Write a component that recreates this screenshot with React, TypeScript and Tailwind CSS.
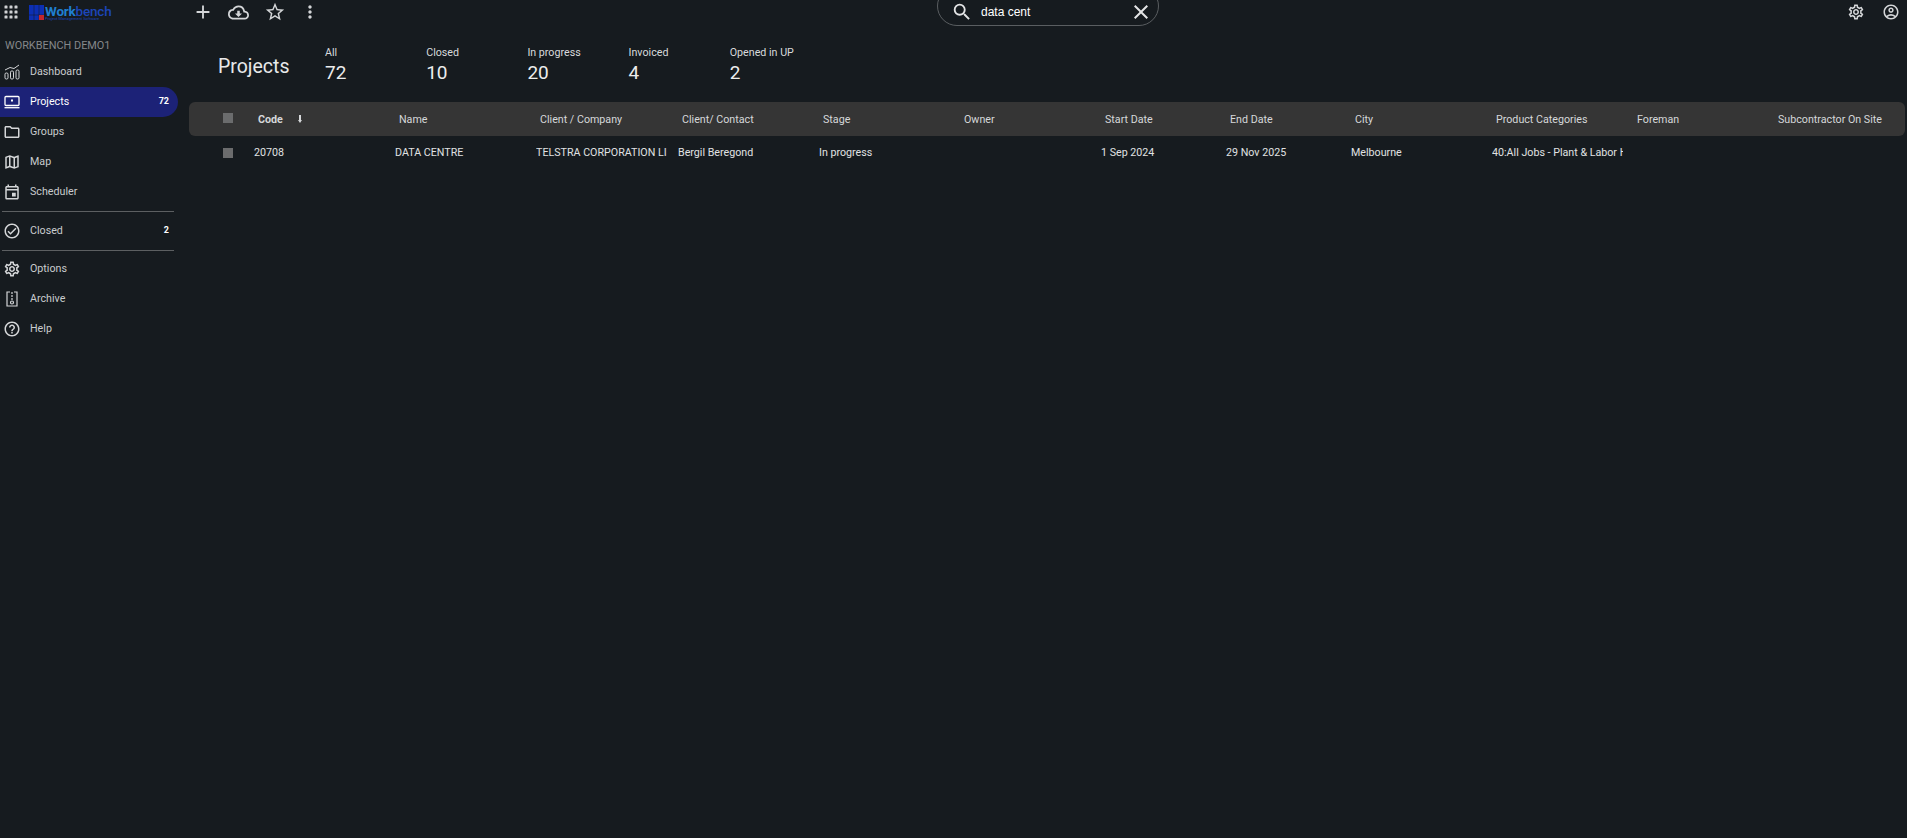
import {
  MdAdd,
  MdClose,
  MdMoreVert,
  MdOutlineAccountCircle,
  MdOutlineCheckCircle,
  MdOutlineCloudDownload,
  MdOutlineEvent,
  MdOutlineFolder,
  MdOutlineHelpOutline,
  MdOutlineMap,
  MdOutlineSettings,
  MdSearch,
  MdStarBorder,
} from 'react-icons/md';
import type { ReactNode } from 'react';

function AppsIcon() {
  const dots = [2, 7, 12];
  return (
    <svg width="14" height="14" viewBox="0 0 14 14" fill="#d0d2d4">
      {dots.map((y) =>
        dots.map((x) => <rect key={`${x}-${y}`} x={x - 1.5} y={y - 1.5} width="3" height="3" rx="0.6" />)
      )}
    </svg>
  );
}

function LogoMark() {
  return (
    <svg width="15" height="15" viewBox="0 0 15 15">
      <rect width="15" height="15" fill="#0c2fb4" />
      <rect x="4.5" width="1" height="15" fill="#15181c" opacity="0.5" />
      <rect x="9.5" width="1" height="15" fill="#15181c" opacity="0.5" />
      <rect y="9.5" width="15" height="1" fill="#15181c" opacity="0.5" />
      <rect x="10" y="10" width="5" height="5" fill="#c1272d" />
    </svg>
  );
}

function DashboardIcon() {
  return (
    <svg width="16" height="16" viewBox="0 0 16 16" fill="none" stroke="#d4d6d8" strokeWidth="1">
      <path d="M1 6 L6 3.5 L10 4.5 L15 1" />
      <rect x="1" y="9" width="3" height="6" rx="1.2" />
      <rect x="6.5" y="7" width="3" height="8" rx="1.2" />
      <rect x="12" y="6" width="3" height="9" rx="1.2" />
    </svg>
  );
}

function ProjectsIcon() {
  return (
    <svg width="16" height="14" viewBox="0 0 16 14" fill="none" stroke="#fff" strokeWidth="1.3">
      <rect x="1" y="1.5" width="14" height="9" rx="1" />
      <path d="M0.5 12.7 H15.5" />
      <rect x="7" y="4.5" width="2" height="2" fill="#fff" stroke="none" />
    </svg>
  );
}

function ArchiveIcon() {
  return (
    <svg width="12" height="16" viewBox="0 0 12 16" fill="none" stroke="#d4d6d8" strokeWidth="1.2">
      <path d="M4 1 H1 V15 H11 V1 H8" />
      <path d="M6 1 V3 M6 4 V6 M6 7 V9" />
      <circle cx="6" cy="11.5" r="1.5" />
    </svg>
  );
}

function SortArrow() {
  return (
    <svg width="4" height="8" viewBox="0 0 4 8" fill="#d6d8da">
      <rect x="1" y="0" width="2" height="6" />
      <path d="M0 5 H4 L2 8 Z" />
    </svg>
  );
}

function NavItem({
  icon,
  label,
  count,
  active,
}: {
  icon: ReactNode;
  label: string;
  count?: string;
  active?: boolean;
}) {
  return (
    <div
      className={`flex h-[30px] w-[178px] items-center rounded-r-full ${active ? 'bg-[#1c2277] text-white' : 'text-[#c9ccce]'}`}
    >
      <div className="mr-[6px] flex w-[24px] shrink-0 items-center justify-center text-[#d4d6d8]">{icon}</div>
      <span className="text-[10.7px]">{label}</span>
      {count && <span className="ml-auto pr-[9px] text-[9px] font-bold text-white">{count}</span>}
    </div>
  );
}

// ширины колонок взяты со скриншота
const columns = [
  { title: 'Name', width: 'w-[141px]' },
  { title: 'Client / Company', width: 'w-[142px]' },
  { title: 'Client/ Contact', width: 'w-[141px]' },
  { title: 'Stage', width: 'w-[141px]' },
  { title: 'Owner', width: 'w-[141px]' },
  { title: 'Start Date', width: 'w-[125px]' },
  { title: 'End Date', width: 'w-[125px]' },
  { title: 'City', width: 'w-[141px]' },
  { title: 'Product Categories', width: 'w-[141px]' },
  { title: 'Foreman', width: 'w-[141px]' },
  { title: 'Subcontractor On Site', width: 'w-[125px]' },
];

const row = [
  'DATA CENTRE',
  'TELSTRA CORPORATION LIMITED',
  'Bergil Beregond',
  'In progress',
  '',
  '1 Sep 2024',
  '29 Nov 2025',
  'Melbourne',
  '40:All Jobs - Plant & Labor Hire',
  '',
  '',
];

const stats = [
  { label: 'All', value: '72' },
  { label: 'Closed', value: '10' },
  { label: 'In progress', value: '20' },
  { label: 'Invoiced', value: '4' },
  { label: 'Opened in UP', value: '2' },
];

export default function App() {
  return (
    <div
      className="h-[838px] w-[1907px] overflow-hidden bg-[#161b1f] text-[#d8dadc]"
      style={{ fontFamily: "Roboto, 'Noto Sans', sans-serif" }}
    >
      {/* Верхняя панель */}
      <div className="flex h-[26px] items-start overflow-hidden">
        <div className="flex h-[24px] w-[937px] shrink-0 items-center">
          <div className="flex w-[29px] justify-start pl-[4px]">
            <AppsIcon />
          </div>
          <LogoMark />
          <div className="ml-[1px] flex h-[15px] w-[100px] flex-col justify-start">
            <span className="text-[13.5px] leading-[12px] font-bold tracking-[-0.2px]">
              <span className="text-[#1f7fd1]">Work</span>
              <span className="font-medium text-[#1c46b8]">bench</span>
            </span>
            <span className="text-[4px] leading-[4px] whitespace-nowrap text-[#1c46b8]">Project Management Software</span>
          </div>
          <div className="ml-[47px] flex items-center text-[#d4d6d8]">
            <MdAdd size={22} />
            <MdOutlineCloudDownload size={21} className="ml-[14px]" />
            <MdStarBorder size={22} className="ml-[15px]" />
            <MdMoreVert size={20} className="ml-[14px]" />
          </div>
        </div>
        <div className="-mt-[14px] flex h-[40px] w-[222px] shrink-0 items-center rounded-full border border-[#5a5e61] pt-[12px] pr-[5px] pl-[13px] text-[#e4e5e6]">
          <MdSearch size={22} />
          <span
            className="ml-[8px] text-[12px] text-white"
            style={{ fontFamily: "'Liberation Sans', Arial, sans-serif" }}
          >
            data cent
          </span>
          <MdClose size={24} className="ml-auto" />
        </div>
        <div className="flex flex-1 items-center justify-end gap-[17px] pt-[3px] pr-[7px] text-[#d4d6d8]">
          <MdOutlineSettings size={18} />
          <MdOutlineAccountCircle size={18} />
        </div>
      </div>

      <div className="flex">
        {/* Боковое меню */}
        <aside className="w-[189px] shrink-0">
          <div className="pt-[13px] pl-[5px] text-[10.9px] leading-[14px] text-[#85888a]">WORKBENCH DEMO1</div>
          <div className="mt-[4px]">
            <NavItem icon={<DashboardIcon />} label="Dashboard" />
            <NavItem icon={<ProjectsIcon />} label="Projects" count="72" active />
            <NavItem icon={<MdOutlineFolder size={18} />} label="Groups" />
            <NavItem icon={<MdOutlineMap size={18} />} label="Map" />
            <NavItem icon={<MdOutlineEvent size={18} />} label="Scheduler" />
          </div>
          <div className="my-[4px] ml-[2px] w-[172px] border-t border-[#5c5f61]" />
          <NavItem icon={<MdOutlineCheckCircle size={18} />} label="Closed" count="2" />
          <div className="mt-[4px] mb-[3px] ml-[2px] w-[172px] border-t border-[#5c5f61]" />
          <NavItem icon={<MdOutlineSettings size={18} />} label="Options" />
          <NavItem icon={<ArchiveIcon />} label="Archive" />
          <NavItem icon={<MdOutlineHelpOutline size={18} />} label="Help" />
        </aside>

        <main className="min-w-0 flex-1">
          {/* Сводка */}
          <div className="flex h-[76px] items-start">
            <h1 className="mt-[27px] ml-[29px] w-[107px] text-[19.5px] leading-[28px] font-normal text-[#e8e9ea]">
              Projects
            </h1>
            {stats.map((s) => (
              <div key={s.label} className="mt-[20px] w-[101.2px] shrink-0">
                <div className="text-[10.7px] leading-[14px] text-[#d8dadc]">{s.label}</div>
                <div className="text-[19px] leading-[25px] text-[#eceded]">{s.value}</div>
              </div>
            ))}
          </div>

          {/* Заголовок таблицы */}
          <div className="flex h-[34px] w-[1716px] items-center rounded-[6px] bg-[#353535] pt-[2px] text-[10.7px] text-[#d6d8da]">
            <div className="-mt-[4px] ml-[34px] h-[10px] w-[10px] bg-[#6b6c6d]" />
            <div className="ml-[25px] flex w-[141px] items-center font-bold">
              Code
              <span className="-mt-[1px] ml-[15px]">
                <SortArrow />
              </span>
            </div>
            {columns.map((c) => (
              <div key={c.title} className={`${c.width} shrink-0 whitespace-nowrap`}>
                {c.title}
              </div>
            ))}
          </div>

          {/* Строка таблицы */}
          <div className="flex h-[34px] items-center text-[10.7px] text-[#e0e2e3]">
            <div className="ml-[34px] h-[10px] w-[10px] bg-[#6b6c6d]" />
            <div className="ml-[21px] w-[141px]">20708</div>
            {row.map((value, i) => (
              <div key={i} className={`${columns[i].width} shrink-0`}>
                <div className="w-[131px] overflow-hidden whitespace-nowrap">{value}</div>
              </div>
            ))}
          </div>
        </main>
      </div>
    </div>
  );
}
